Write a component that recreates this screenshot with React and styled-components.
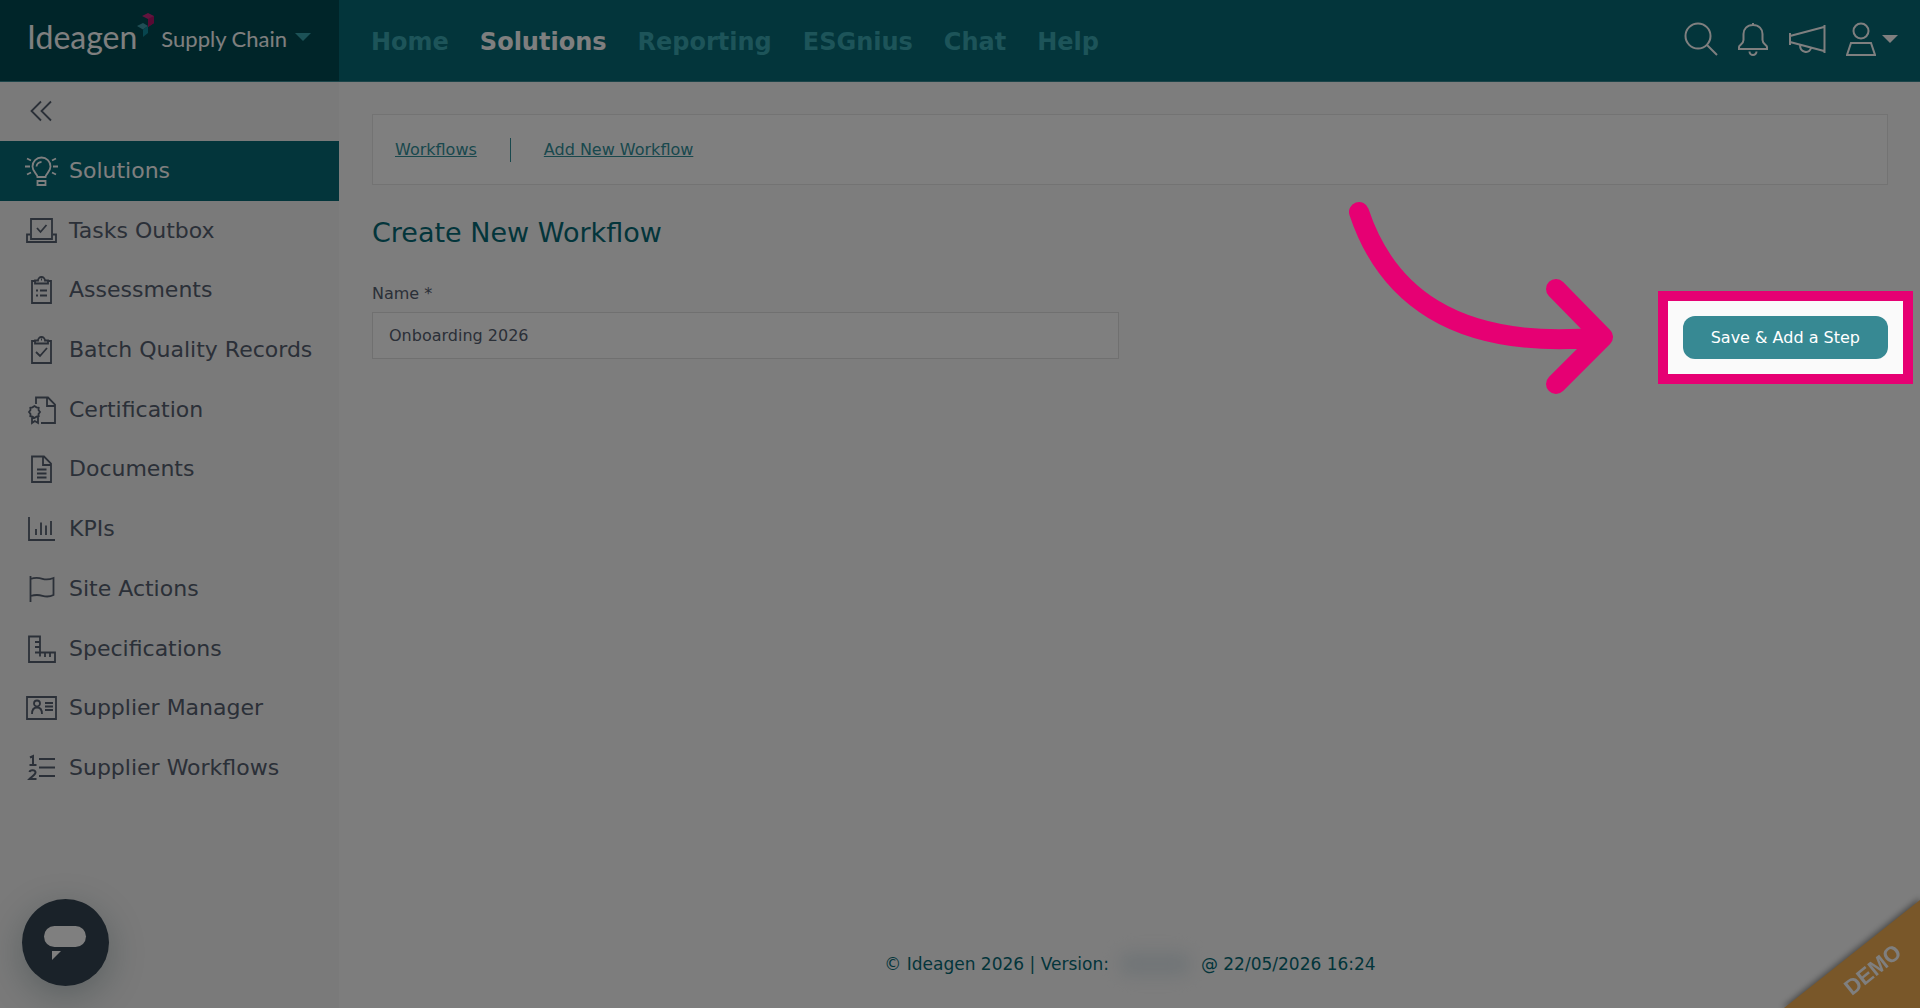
import React from "react";
import styled, { createGlobalStyle } from "styled-components";

const sans = `Verdana, "DejaVu Sans", sans-serif`;

const GlobalStyle = createGlobalStyle`
  *, *::before, *::after { box-sizing: border-box; }
  body { margin: 0; background: #fafafa; font-family: ${sans}; color: #566070; overflow: hidden; }
  h1, ul { margin: 0; padding: 0; }
  button { font: inherit; cursor: pointer; }
`;

const Page = styled.div`
  display: grid;
  grid-template-columns: 339px 1fr;
  grid-template-rows: 82px 1fr;
  min-height: 100vh;
`;

const Brand = styled.div`
  display: flex;
  align-items: center;
  padding: 0 0 8px 27px;
  background: #004b52;
  border-bottom: 1px solid #378993;
`;

const BrandButton = styled.button`
  display: flex;
  align-items: center;
  gap: 6px;
  padding: 0;
  border: 0;
  background: none;
  color: #fff;
  font-family: Lato, sans-serif;
  white-space: nowrap;
`;

const BrandName = styled.span`
  display: flex;
  align-items: center;
  font-size: 32px;
  line-height: 40px;
`;

const BrandMark = styled.svg`
  align-self: flex-start;
  margin-top: -4px;
`;

const BrandProduct = styled.span`
  padding: 4px 2px 0 0;
  font-size: 22px;
  line-height: 40px;
`;

const Caret = styled.span`
  border: 8px solid transparent;
  border-top-color: ${(p) => p.$color};
  border-bottom: 0;
`;

const Header = styled.header`
  display: flex;
  align-items: center;
  justify-content: space-between;
  padding: 0 22px 0 32px;
  background: #066a76;
  border-bottom: 1px solid #378993;
`;

const Nav = styled.nav`
  display: flex;
  gap: 31px;
  padding-top: 2px;
`;

const NavLink = styled.a`
  color: ${(p) => (p.$active ? "#fff" : "#3aa9b3")};
  font-size: 24px;
  font-weight: 700;
  line-height: 32px;
  text-decoration: none;
`;

const Tools = styled.div`
  display: flex;
  align-items: center;
  gap: 20px;
  padding-bottom: 3px;
`;

const ToolButton = styled.button`
  display: flex;
  align-items: center;
  gap: 6px;
  padding: 0;
  border: 0;
  background: none;
  color: #fff;
`;

const Sidebar = styled.aside`
  background: #f4f4f4;
`;

const Collapse = styled.button`
  display: flex;
  align-items: center;
  width: 100%;
  height: 59px;
  padding: 0 25px 2px;
  border: 0;
  background: none;
  color: #566070;
`;

const Menu = styled.ul`
  display: grid;
  grid-auto-rows: 1fr;
  height: 657px;
  list-style: none;
`;

const MenuLink = styled.a`
  display: flex;
  align-items: center;
  gap: 11px;
  height: 100%;
  padding-left: 25px;
  background: ${(p) => (p.$active ? "#066a76" : "transparent")};
  color: ${(p) => (p.$active ? "#fff" : "#566070")};
  font-size: 22px;
  line-height: 28px;
  text-decoration: none;

  svg { overflow: visible; }
`;

const Main = styled.main`
  display: flex;
  flex-direction: column;
  padding: 32px 32px 32px 33px;
`;

const Crumbs = styled.nav`
  display: flex;
  align-items: center;
  height: 71px;
  padding: 0 22px;
  background: #fff;
  border: 1px solid #e6e6e6;
`;

const CrumbLink = styled.a`
  color: #33919b;
  font-size: 16px;
  line-height: 24px;

  & + & {
    margin-left: 33px;
    padding-left: 33px;
    border-left: 1px solid #33919b;
  }
`;

const Title = styled.h1`
  margin-top: 30px;
  color: #066a76;
  font-size: 27px;
  font-weight: 400;
  line-height: 36px;
`;

const FormRow = styled.form`
  display: flex;
  align-items: flex-end;
  justify-content: space-between;
  margin-top: 31px;
`;

const Field = styled.div`
  display: flex;
  flex-direction: column;
  width: 50%;
  max-width: 747px;
`;

const Label = styled.label`
  margin-bottom: 6px;
  font-size: 16px;
  line-height: 24px;
`;

const TextInput = styled.input`
  height: 47px;
  padding: 0 16px;
  border: 1px solid #e0e0e0;
  background: #fff;
  color: #566070;
  font-family: inherit;
  font-size: 16px;
`;

const Action = styled.div`
  position: relative;
  display: flex;
`;

const SaveButton = styled.button`
  height: 43px;
  padding: 0 28px;
  border: 0;
  border-radius: 12px;
  background: #378993;
  color: #fff;
  font-size: 16px;
`;

const Spotlight = styled.div`
  position: absolute;
  z-index: 5;
  inset: -25px;
  border: 10px solid #e60073;
  box-shadow: 0 0 0 3000px rgba(0, 0, 0, 0.5);
  pointer-events: none;
`;

const Arrow = styled.svg`
  position: absolute;
  z-index: 6;
  right: 273px;
  top: -116px;
  pointer-events: none;
`;

const Footer = styled.footer`
  display: flex;
  justify-content: center;
  margin-top: auto;
  color: #066a76;
  font-size: 17px;
  line-height: 24px;
`;

const Redacted = styled.span`
  width: 72px;
  margin: 0 10px;
  border-radius: 12px;
  background: #e2eaee;
  filter: blur(8px);
`;

const ChatButton = styled.button`
  position: fixed;
  left: 22px;
  bottom: 22px;
  display: grid;
  place-items: center;
  width: 87px;
  height: 87px;
  padding: 0;
  border: 0;
  border-radius: 50%;
  background: #344452;
  box-shadow: 0 10px 36px rgba(20, 60, 66, 0.28);
`;

const Ribbon = styled.svg`
  position: fixed;
  right: 0;
  bottom: 0;
`;

const RibbonShade = styled.path`
  filter: blur(3px);
`;

const icons = {
  Solutions: (
    <>
      <path d="M12 20c0-3-5-5-5-10.500a9 9 0 0 1 18 0C25 15 20 17 20 20z M12 24h8v4h-8z M13 24h6" transform="translate(.5 0)" />
      <path d="M11.500 9.500a5 5 0 0 1 5-4.500M0 9.500h5M28 9.500h5M2 1.500l4 2M31 1.500l-4 2M2 17.500l4-2M31 17.500l-4-2" />
    </>
  ),
  "Tasks Outbox": <path d="M6 20V2h21v18M6 20v2h21v-2M5 17.500H2V25h29v-7.500h-3M12 11l3.500 4 6-7" />,
  Assessments: (
    <path d="M10 5H7v22h19V5h-3M10 7.500V4.500h3a3.500 3.500 0 0 1 7 0h3v3zM16 3.500h1M11 14.500h2M15 14.500h7M11 19.500h2M15 19.500h7" />
  ),
  "Batch Quality Records": (
    <path d="M10 5H7v22h19V5h-3M10 7.500V4.500h3a3.500 3.500 0 0 1 7 0h3v3zM16 3.500h1M11 16l4 4 7-8" />
  ),
  Certification: (
    <path d="M11 8V1.500h12l7 7V27H16M22 2v8h8M15 16l-1.500 2 .2 2.200-2.200.5L9.500 22l-2-1.300-2.200-.5.200-2.200L4 16l1.500-2-.2-2.200 2.200-.5 2-1.300 2 1.300 2.200.5-.2 2.200zM7 21v6l2.800-2L13 27v-6" />
  ),
  Documents: <path d="M7 1.500h12l7 7V27H7zM18 2v8h8M12 14.500h9.500M12 18.500h9.500M12 22.500h9.500" />,
  KPIs: <path d="M4 2v23h26M11 20v-6M16 20V7.500M21 20v-9.500M26 20V6" />,
  "Site Actions": <path d="M5.500 1v26M5.500 4c5-2 8-1.500 12-.2s7 .8 11-.8v17c-4 2-7 2-11 .8s-7-1.300-12 .2" />,
  Specifications: <path d="M4 1.500h11v16h15V27H4zM10 7h5M10 12h5M10 17.500h5v4M20 18v4M25 18v4" />,
  "Supplier Manager": (
    <path d="M2 3h29v22H2zM7 20c0-5 2-6.500 5-6.500s5 1.500 5 6.500M12 6.500a3 3 0 1 1 0 6 3 3 0 0 1 0-6M20 9h8M20 12.500h8M20 16h8" />
  ),
  "Supplier Workflows": (
    <>
      <path d="M14 5h16M14 13.500h16M14 22h16" />
      <path d="M5 3.500l3-1.500v9M4.500 11h7M4.500 18c.5-2.500 6-2.500 6 .5 0 2-3.500 4-6 6.500h7" strokeWidth="2" />
    </>
  ),
};

const navItems = ["Home", "Solutions", "Reporting", "ESGnius", "Chat", "Help"];

function Stroke({ w, h, width = 1.8, children }) {
  return (
    <svg width={w} height={h} viewBox={`0 0 ${w} ${h}`} fill="none" stroke="currentColor" strokeWidth={width} aria-hidden="true">
      {children}
    </svg>
  );
}

export default function App() {
  return (
    <>
      <GlobalStyle />
      <Page>
        <Brand>
          <BrandButton type="button">
            <BrandName>
              Ideagen
              <BrandMark width="18" height="26" viewBox="0 0 18 26" aria-hidden="true">
                <path d="M5 3l6-3 6 3v7l-6 4V6z" fill="#c4287c" />
                <path d="M11 6l6-3v7l-6 4z" fill="#b01466" />
                <path d="M0 13l6-3 5 3-5 3.500z" fill="#3f9dab" />
                <path d="M6 16.500l5-3.500v7l-5 4z" fill="#0f8a9c" />
              </BrandMark>
            </BrandName>
            <BrandProduct>Supply Chain</BrandProduct>
            <Caret $color="#38a5af" />
          </BrandButton>
        </Brand>
        <Header>
          <Nav aria-label="Primary">
            {navItems.map((item) => (
              <NavLink key={item} href="#" $active={item === "Solutions"}>{item}</NavLink>
            ))}
          </Nav>
          <Tools>
            <ToolButton type="button" aria-label="Search">
              <Stroke w={34} h={34} width={2}>
                <circle cx="14" cy="14" r="12.500" />
                <path d="M23 23l10 10" />
              </Stroke>
            </ToolButton>
            <ToolButton type="button" aria-label="Notifications">
              <Stroke w={30} h={34} width={2}>
                <path d="M15 1v2M15 3c-6 0-9.500 4-9.500 9v6c0 4-4.500 5-4.500 7v2h28v-2c0-2-4.500-3-4.500-7v-6c0-5-3.500-9-9.500-9zM11.500 29.500a3.500 3.500 0 0 0 7 0" />
              </Stroke>
            </ToolButton>
            <ToolButton type="button" aria-label="Announcements">
              <Stroke w={38} h={34} width={2}>
                <path d="M2 11v12M2 14l34-9M2 20l34 9M36.500 3v28M12 23c0 8 9 9 11 3" />
              </Stroke>
            </ToolButton>
            <ToolButton type="button" aria-label="Account">
              <Stroke w={30} h={34} width={2}>
                <circle cx="15" cy="9" r="7.500" />
                <path d="M5 21h20l4 12H1z" />
              </Stroke>
              <Caret $color="#fff" />
            </ToolButton>
          </Tools>
        </Header>
        <Sidebar>
          <Collapse type="button" aria-label="Collapse menu">
            <Stroke w={33} h={28}>
              <path d="M16 4.500L6.500 14 16 23.500M26 4.500L16.500 14 26 23.500" />
            </Stroke>
          </Collapse>
          <Menu>
            {Object.entries(icons).map(([name, icon]) => (
              <li key={name}>
                <MenuLink href="#" $active={name === "Solutions"}>
                  <Stroke w={33} h={28}>{icon}</Stroke>
                  {name}
                </MenuLink>
              </li>
            ))}
          </Menu>
        </Sidebar>
        <Main>
          <Crumbs aria-label="Workflow pages">
            <CrumbLink href="#">Workflows</CrumbLink>
            <CrumbLink href="#">Add New Workflow</CrumbLink>
          </Crumbs>
          <Title>Create New Workflow</Title>
          <FormRow onSubmit={(e) => e.preventDefault()}>
            <Field>
              <Label htmlFor="name">Name *</Label>
              <TextInput id="name" defaultValue="Onboarding 2026" />
            </Field>
            <Action>
              <SaveButton type="submit">Save &amp; Add a Step</SaveButton>
              <Spotlight />
              <Arrow width="268" height="196" viewBox="0 0 268 196" fill="none" stroke="#e60073" strokeWidth="20" strokeLinecap="round" strokeLinejoin="round" aria-hidden="true">
                <path d="M12 12C38 90 103 152 256 137M209 89l47 48-47 47" />
              </Arrow>
            </Action>
          </FormRow>
          <Footer>
            © Ideagen 2026 | Version: <Redacted /> @ 22/05/2026 16:24
          </Footer>
        </Main>
      </Page>
      <ChatButton type="button" aria-label="Open chat">
        <svg width="43" height="34" viewBox="0 0 43 34" fill="#fff" aria-hidden="true">
          <rect width="42" height="21" rx="10.500" />
          <path d="M8 25h9l-9 9z" />
        </svg>
      </ChatButton>
      <Ribbon width="144" height="116" viewBox="0 0 144 116" aria-label="Demo">
        <RibbonShade d="M6 116L144 6v110z" fill="#000" opacity=".45" />
        <path d="M8 116L144 8v108z" fill="#f2ae52" />
        <text x="97" y="85" fill="#fff" fontFamily="Liberation Sans, Arial, sans-serif" fontSize="22" fontWeight="700" textAnchor="middle" transform="rotate(-39 97 78)">DEMO</text>
      </Ribbon>
    </>
  );
}
